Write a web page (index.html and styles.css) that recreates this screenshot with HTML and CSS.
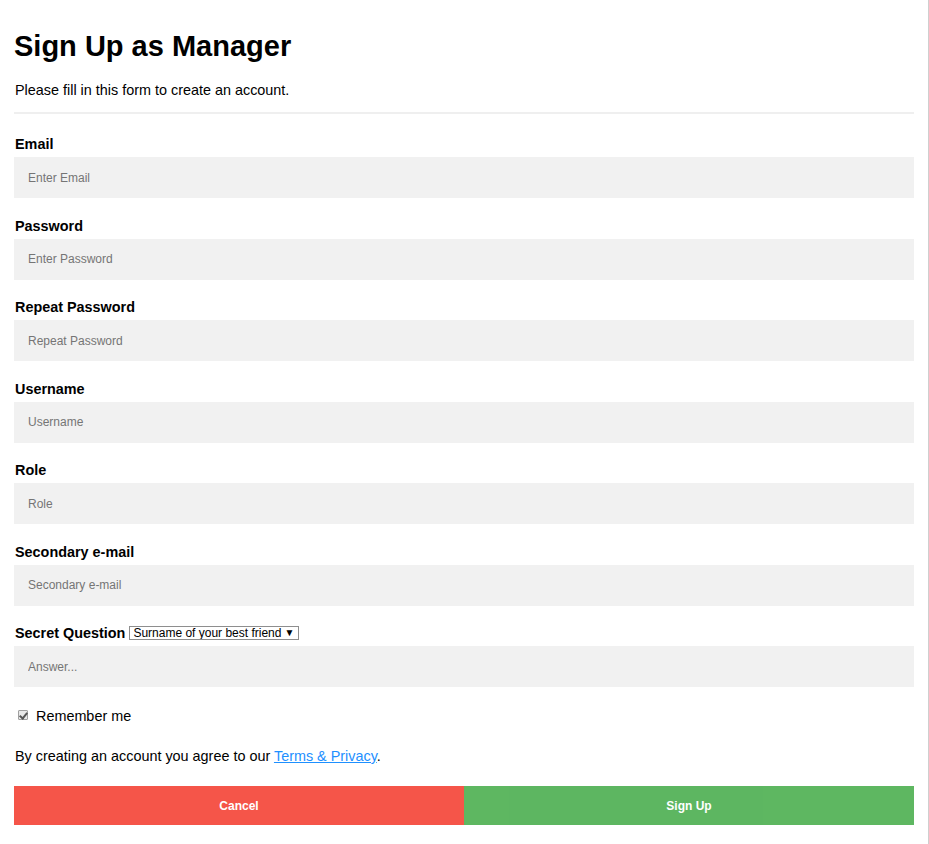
FILE: index.html
```html
<!DOCTYPE html>
<html lang="en">
<head>
<meta charset="utf-8">
<title>Sign Up as Manager</title>
<link rel="stylesheet" href="styles.css">
</head>
<body>
<div class="page">
  <form class="form">
    <h1 class="title">Sign Up as Manager</h1>
    <p class="intro">Please fill in this form to create an account.</p>
    <hr class="rule">

    <label class="field-label" for="email">Email</label>
    <input class="field" id="email" type="text" placeholder="Enter Email">

    <label class="field-label" for="psw">Password</label>
    <input class="field" id="psw" type="password" placeholder="Enter Password">

    <label class="field-label" for="psw-repeat">Repeat Password</label>
    <input class="field" id="psw-repeat" type="password" placeholder="Repeat Password">

    <label class="field-label" for="username">Username</label>
    <input class="field" id="username" type="text" placeholder="Username">

    <label class="field-label" for="role">Role</label>
    <input class="field" id="role" type="text" placeholder="Role">

    <label class="field-label" for="email2">Secondary e-mail</label>
    <input class="field" id="email2" type="text" placeholder="Secondary e-mail">

    <div class="field-label question-row">
      <label for="question">Secret Question</label>
      <span class="select-wrap">
        <select class="question-select" id="question">
          <option>Surname of your best friend</option>
          <option>Name of your first pet</option>
          <option>City you were born in</option>
        </select>
      </span>
    </div>
    <input class="field" id="answer" type="text" placeholder="Answer...">

    <label class="remember">
      <input class="check" type="checkbox" checked>
      <span>Remember me</span>
    </label>

    <p class="terms">By creating an account you agree to our <a class="terms-link" href="#">Terms &amp; Privacy</a>.</p>

    <div class="actions">
      <button type="button" class="btn btn-cancel">Cancel</button>
      <button type="submit" class="btn btn-signup">Sign Up</button>
    </div>
  </form>
</div>
</body>
</html>
```

FILE: styles.css
```css
* {
  box-sizing: border-box;
}

html, body {
  margin: 0;
  padding: 0;
  background: #ffffff;
}

body {
  font-family: "Liberation Sans", Arial, sans-serif;
  color: #000;
}

.page {
  width: 929px;
  min-height: 844px;
  padding: 29px 14px 0 14px;
  border-right: 1px solid #cfcfcf;
}

.form {
  display: flex;
  flex-direction: column;
  width: 900px;
}

.title {
  margin: 0;
  font-size: 29px;
  line-height: 34px;
  font-weight: bold;
}

.intro {
  margin: 18px 0 0 0;
  padding-left: 1px;
  font-size: 14.4px;
  line-height: 18px;
}

.rule {
  margin: 13px 0 22px 0;
  height: 0;
  border: 0;
  border-top: 1px solid #efefef;
  border-bottom: 1px solid #efefef;
}

.field-label {
  display: block;
  padding-left: 1px;
  font-size: 14.4px;
  line-height: 16px;
  font-weight: bold;
  margin-bottom: 5px;
}

.field {
  display: block;
  width: 100%;
  height: 41px;
  margin: 0 0 19.5px 0;
  padding: 0 14px;
  border: none;
  outline: none;
  background: #f1f1f1;
  font-family: "Liberation Sans", Arial, sans-serif;
  font-size: 12px;
  color: #000;
}

.field::placeholder {
  color: #757575;
}

.question-row {
  display: flex;
  align-items: flex-start;
  gap: 4px;
}

.select-wrap {
  position: relative;
  display: inline-block;
  margin-top: 1px;
}

.select-wrap::after {
  content: "\25BC";
  position: absolute;
  right: 5px;
  top: 1px;
  font-size: 10px;
  line-height: 12px;
  color: #000;
  pointer-events: none;
}

.question-select {
  -webkit-appearance: none;
  appearance: none;
  display: block;
  width: 170px;
  height: 14px;
  margin: 0;
  padding: 0 16px 0 3px;
  border: 1px solid #8e8e8e;
  border-radius: 0;
  background: #fff;
  font-family: "Liberation Sans", Arial, sans-serif;
  font-size: 12px;
  line-height: 12px;
  font-weight: normal;
  color: #000;
  outline: none;
}

.remember {
  display: flex;
  align-items: center;
  font-size: 14.4px;
  line-height: 18px;
}

.check {
  -webkit-appearance: none;
  appearance: none;
  position: relative;
  width: 10px;
  height: 10px;
  margin: -2px 8px 0 4px;
  border: 1px solid #a0a0a0;
  border-radius: 1px;
  background: #e8e8e8;
}

.check:checked::after {
  content: "";
  position: absolute;
  left: 2px;
  top: 0px;
  width: 3px;
  height: 6px;
  border-right: 2px solid #555;
  border-bottom: 2px solid #555;
  transform: rotate(40deg);
}

.terms {
  margin: 22px 0 0 0;
  padding-left: 1px;
  font-size: 14.4px;
  line-height: 18px;
}

.terms-link {
  color: #1e90ff;
  text-decoration: underline;
}

.actions {
  display: flex;
  margin-top: 21.5px;
}

.btn {
  flex: 1 1 0;
  height: 39px;
  border: none;
  padding: 0;
  margin: 0;
  color: #fff;
  font-family: "Liberation Sans", Arial, sans-serif;
  font-size: 12px;
  font-weight: bold;
  opacity: 0.9;
  cursor: pointer;
}

.btn-cancel {
  background: #f44336;
}

.btn-signup {
  background: #4caf50;
}
```
